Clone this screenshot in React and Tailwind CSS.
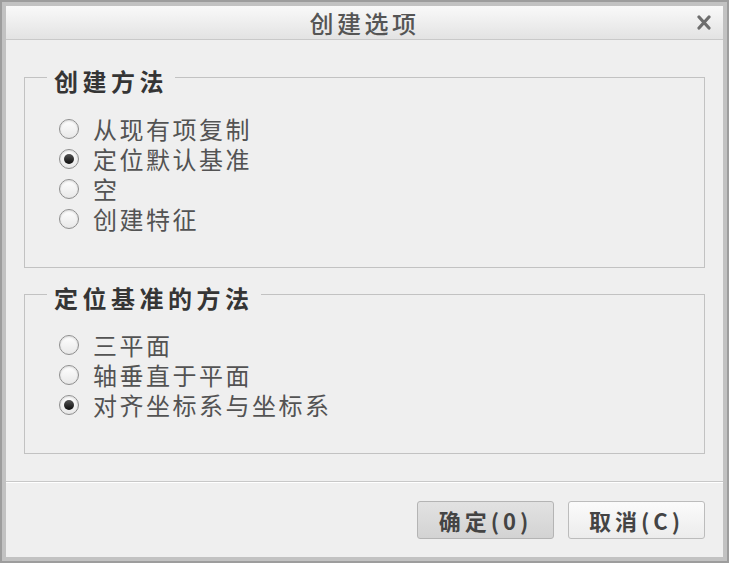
import React, { useState } from "react";

const font = { fontFamily: '"Noto Sans CJK SC", "Noto Sans", sans-serif' };

function Radio({ label, checked, onSelect }) {
    return (
        <label className="flex items-center h-[30px] cursor-pointer" onClick={onSelect}>
            <span className="w-[20px] h-[20px] ml-[34px] shrink-0 rounded-full border border-[#8e8e8e] bg-gradient-to-b from-[#ffffff] to-[#e8e8e8] shadow-[inset_0_1px_2px_rgba(0,0,0,0.15)] flex items-center justify-center">
                {checked && (
                    <span className="w-[10px] h-[10px] rounded-full bg-gradient-to-b from-[#555] to-[#0f0f0f]" />
                )}
            </span>
            <span className="ml-[14px] text-[24px] leading-[30px] tracking-[2.5px] text-[#535353]">
                {label}
            </span>
        </label>
    );
}

function Group({ title, options, value, onChange, className }) {
    return (
        <fieldset className={"border border-[#c2c2c2] " + className}>
            <legend className="ml-[22px] px-[7px] pt-[8px] text-[24px] leading-[30px] tracking-[4.5px] font-bold text-[#353535]">
                {title}
            </legend>
            {options.map((opt) => (
                <Radio
                    key={opt}
                    label={opt}
                    checked={value === opt}
                    onSelect={() => onChange(opt)}
                />
            ))}
        </fieldset>
    );
}

export default function App() {
    const [method, setMethod] = useState("定位默认基准");
    const [datum, setDatum] = useState("对齐坐标系与坐标系");

    return (
        <div style={font} className="w-[729px] h-[563px] bg-[#9d9d9d] p-[2px]">
            <div className="w-full h-full border-[4px] border-[#c2c2c2] bg-[#efefef] flex flex-col">
                <div className="h-[34px] shrink-0 flex items-center relative bg-gradient-to-b from-[#f9f9f9] to-[#e3e3e3] border-b border-[#c9c9c9]">
                    <div className="flex-1 text-center text-[24px] leading-[30px] tracking-[3.5px] font-medium text-[#555]">
                        创建选项
                    </div>
                    <svg
                        className="absolute right-[12px] top-[9px]"
                        width="14"
                        height="15"
                        viewBox="0 0 14 15"
                    >
                        <path d="M2 2 L12 13 M12 2 L2 13" stroke="#6e6e6e" strokeWidth="3.2" strokeLinecap="round" />
                    </svg>
                </div>

                <div className="flex-1 px-[18px]">
                    <Group
                        title="创建方法"
                        options={["从现有项复制", "定位默认基准", "空", "创建特征"]}
                        value={method}
                        onChange={setMethod}
                        className="mt-[18px] pt-[18px] pb-[33px]"
                    />
                    <Group
                        title="定位基准的方法"
                        options={["三平面", "轴垂直于平面", "对齐坐标系与坐标系"]}
                        value={datum}
                        onChange={setDatum}
                        className="mt-[7px] pt-[17px] pb-[33px]"
                    />
                </div>

                <div className="h-[76px] shrink-0 border-t border-[#c8c8c8] shadow-[inset_0_1px_0_#ffffff] flex justify-end items-start pt-[19px] pr-[18px] gap-[14px]">
                    <button className="w-[137px] h-[38px] rounded-[3px] border border-[#b4b4b4] bg-gradient-to-b from-[#e2e2e2] to-[#d3d3d3] text-[22px] leading-[36px] font-bold tracking-[4px] text-[#444]">
                        确定(0)
                    </button>
                    <button className="w-[137px] h-[38px] rounded-[3px] border border-[#bcbcbc] bg-gradient-to-b from-[#fbfbfb] to-[#ececec] text-[22px] leading-[36px] font-bold tracking-[4px] text-[#444]">
                        取消(C)
                    </button>
                </div>
            </div>
        </div>
    );
}
